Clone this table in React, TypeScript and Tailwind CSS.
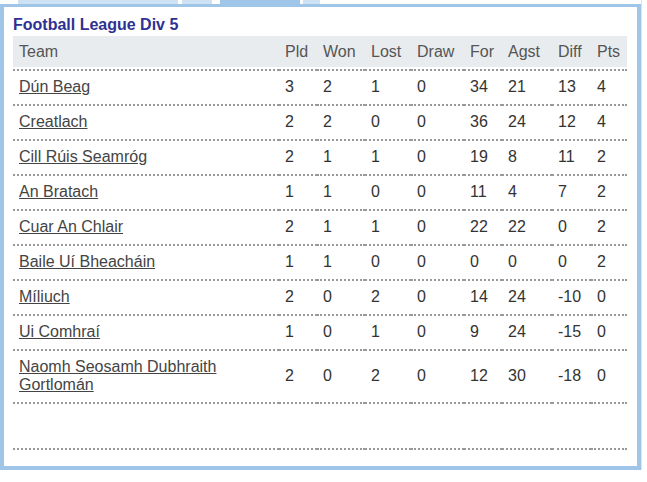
import React from "react"

type Row = {
  team: string
  pld: number
  won: number
  lost: number
  draw: number
  forr: number
  agst: number
  diff: number
  pts: number
}

const rows: Row[] = [
  { team: "Dún Beag", pld: 3, won: 2, lost: 1, draw: 0, forr: 34, agst: 21, diff: 13, pts: 4 },
  { team: "Creatlach", pld: 2, won: 2, lost: 0, draw: 0, forr: 36, agst: 24, diff: 12, pts: 4 },
  { team: "Cill Rúis Seamróg", pld: 2, won: 1, lost: 1, draw: 0, forr: 19, agst: 8, diff: 11, pts: 2 },
  { team: "An Bratach", pld: 1, won: 1, lost: 0, draw: 0, forr: 11, agst: 4, diff: 7, pts: 2 },
  { team: "Cuar An Chlair", pld: 2, won: 1, lost: 1, draw: 0, forr: 22, agst: 22, diff: 0, pts: 2 },
  { team: "Baile Uí Bheacháin", pld: 1, won: 1, lost: 0, draw: 0, forr: 0, agst: 0, diff: 0, pts: 2 },
  { team: "Míliuch", pld: 2, won: 0, lost: 2, draw: 0, forr: 14, agst: 24, diff: -10, pts: 0 },
  { team: "Ui Comhraí", pld: 1, won: 0, lost: 1, draw: 0, forr: 9, agst: 24, diff: -15, pts: 0 },
  { team: "Naomh Seosamh Dubhraith Gortlomán", pld: 2, won: 0, lost: 2, draw: 0, forr: 12, agst: 30, diff: -18, pts: 0 },
]

const headers = ["Team", "Pld", "Won", "Lost", "Draw", "For", "Agst", "Diff", "Pts"]
const widths = [266, 38, 48, 46, 53, 38, 50, 39, 36]

export default function App() {
  return (
    <div className="w-[647px] h-[482px] bg-white font-['Liberation_Sans',Arial,sans-serif]">
      <div className="w-[642px] border-r border-[#e2e2e2]">
        {/* Tabs */}
        <div className="flex h-[4px]">
          <div className="ml-[18px] w-[160px] bg-[#cfe2f3]" />
          <div className="ml-[4px] w-[30px] bg-[#cfe2f3]" />
          <div className="ml-[8px] w-[80px] bg-[#9fc5e8]" />
          <div className="ml-[3px] w-[17px] bg-[#cfe2f3]" />
        </div>

        {/* Panel */}
        <div className="w-[641px] h-[466px] border-4 border-t-[3px] border-[#9fc5e8] pl-[9px] pr-[10px]">
          <h2 className="pt-[8px] mb-[2px] text-[16px] leading-[19px] font-bold text-[#2e3192]">
            Football League Div 5
          </h2>

          <table className="table-fixed border-collapse w-[614px] text-[16px] leading-[18px]">
            <colgroup>
              {widths.map((w, i) => (
                <col key={i} style={{ width: w }} />
              ))}
            </colgroup>
            <thead>
              <tr>
                {headers.map((h) => (
                  <th key={h} className="p-0 border-b-2 border-dotted border-[#999] font-normal text-left">
                    <div className="h-[31px] mb-[2px] bg-[#e9ecef] pl-[6px] pt-[1px] flex items-center text-[#555]">{h}</div>
                  </th>
                ))}
              </tr>
            </thead>
            <tbody>
              {rows.map((r) => (
                <tr key={r.team} className="border-b-2 border-dotted border-[#999]">
                  <td className="pt-[7px] pb-[8px] pl-[6px] pr-[40px] align-middle">
                    <a className="underline text-[#444]">{r.team}</a>
                  </td>
                  {[r.pld, r.won, r.lost, r.draw, r.forr, r.agst, r.diff, r.pts].map((v, i) => (
                    <td key={i} className="pt-[7px] pb-[8px] pl-[6px] align-middle text-[#333]">
                      {v}
                    </td>
                  ))}
                </tr>
              ))}
              <tr className="border-b-2 border-dotted border-[#999]">
                <td colSpan={9} className="h-[46px]" />
              </tr>
            </tbody>
          </table>
        </div>
      </div>
    </div>
  )
}
